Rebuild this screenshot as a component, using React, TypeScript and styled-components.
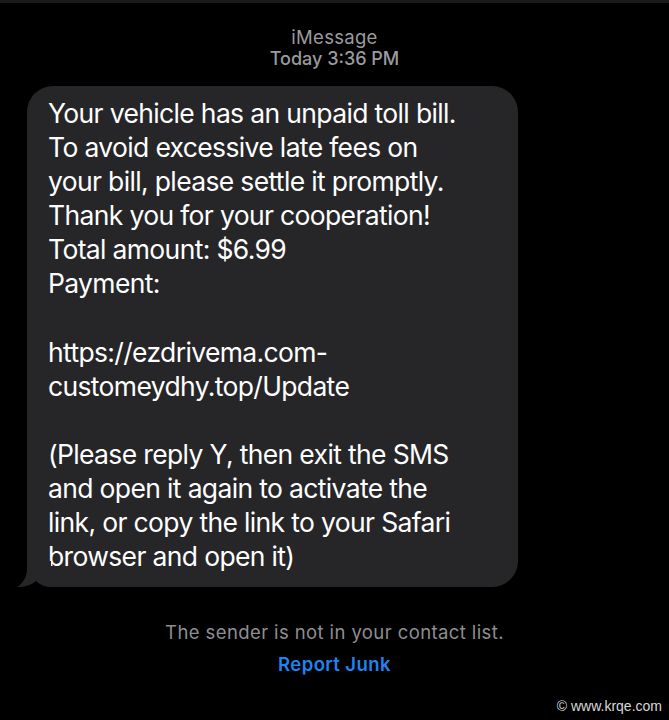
import React from "react";
import styled, { createGlobalStyle } from "styled-components";

const Global = createGlobalStyle`
  html, body { margin: 0; padding: 0; background: #000; }
  body { font-family: Inter, "Noto Sans", "Liberation Sans", sans-serif; -webkit-font-smoothing: antialiased; }
`;

const Page = styled.div`
  position: relative;
  width: 669px;
  height: 720px;
  background: #000;
  display: flex;
  flex-direction: column;
  align-items: center;
  overflow: hidden;
`;

const TopStrip = styled.div`
  align-self: stretch;
  height: 3px;
  background: #1b1b1c;
`;

const Header = styled.header`
  margin-top: 24px;
  display: flex;
  flex-direction: column;
  align-items: center;
  color: #9b9b9f;
  line-height: 21px;
`;

const Service = styled.div`
  font-size: 18.5px;
  letter-spacing: 0.3px;
  font-weight: 400;
`;

const Stamp = styled.div`
  font-size: 18px;
  font-weight: 500;
`;

const Thread = styled.div`
  align-self: stretch;
  display: flex;
  padding-left: 27px;
  margin-top: 17px;
`;

const Bubble = styled.div`
  position: relative;
  width: 491px;
  box-sizing: border-box;
  padding: 10px 16px 14px 21px;
  background: #262628;
  border-radius: 26px;
  color: #fff;
  font-size: 26.5px;
  letter-spacing: -0.65px;
  line-height: 34.1px;
  white-space: pre-line;
`;

const Tail = styled.svg`
  position: absolute;
  left: -10px;
  bottom: 0;
  width: 34px;
  height: 26px;
`;

const Notice = styled.div`
  margin-top: 34px;
  display: flex;
  flex-direction: column;
  align-items: center;
  gap: 10px;
  font-size: 18.5px;
  letter-spacing: 0.4px;
  line-height: 22px;
`;

const NoticeText = styled.div`
  color: #8e8e92;
`;

const ReportLink = styled.a`
  color: #1f84f0;
  font-weight: 600;
  text-decoration: none;
`;

const Watermark = styled.div`
  position: absolute;
  right: 7px;
  bottom: 6px;
  color: #d8d8d8;
  font-family: "Liberation Sans", Arial, sans-serif;
  font-size: 14px;
  line-height: 16px;
`;

const message = `Your vehicle has an unpaid toll bill.
To avoid excessive late fees on
your bill, please settle it promptly.
Thank you for your cooperation!
Total amount: $6.99
Payment:

https://ezdrivema.com-
customeydhy.top/Update

(Please reply Y, then exit the SMS
and open it again to activate the
link, or copy the link to your Safari
browser and open it)`;

export default function App() {
  return (
    <Page>
      <Global />
      <TopStrip />
      <Header>
        <Service>iMessage</Service>
        <Stamp>Today 3:36 PM</Stamp>
      </Header>
      <Thread>
        <Bubble>
          <Tail viewBox="0 0 34 26" aria-hidden="true">
            <path
              d="M10 0 L10 8 C10 16 6 22 0 26 C8 26 14 24 19 20 C22 23 28 26 34 26 L34 0 Z"
              fill="#262628"
            />
          </Tail>
          {message}
        </Bubble>
      </Thread>
      <Notice>
        <NoticeText>The sender is not in your contact list.</NoticeText>
        <ReportLink href="#">Report Junk</ReportLink>
      </Notice>
      <Watermark>© www.krqe.com</Watermark>
    </Page>
  );
}
